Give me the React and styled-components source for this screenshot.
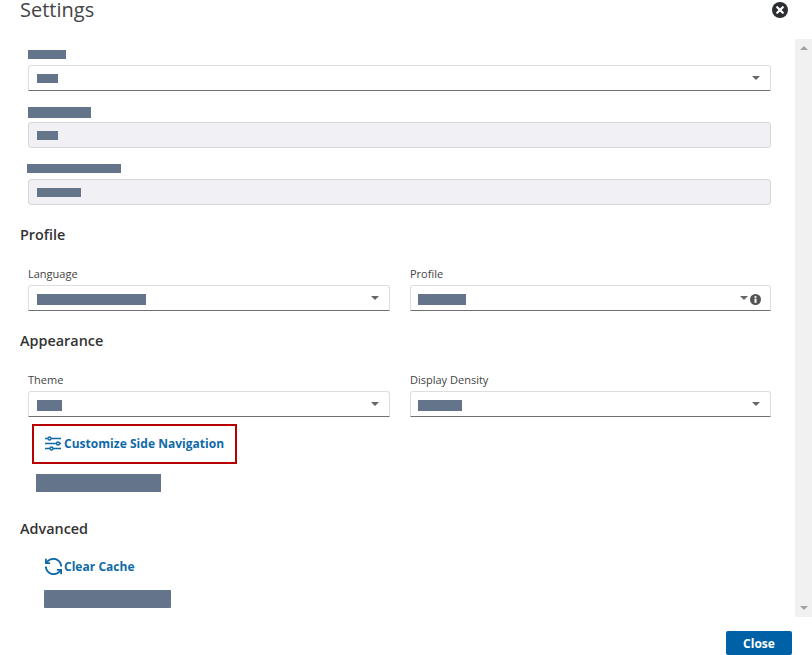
import styled, { createGlobalStyle } from "styled-components"

const Global = createGlobalStyle`
    html, body {
        margin: 0;
        padding: 0;
        background: #fff;
        overflow: hidden;
    }
    * {
        box-sizing: border-box;
    }
`

const Modal = styled.div`
    display: flex;
    flex-direction: column;
    width: 812px;
    height: 655px;
    overflow: hidden;
    font-family: "Open Sans", "Liberation Sans", sans-serif;
    color: #333;
`

const Header = styled.header`
    display: flex;
    justify-content: space-between;
    align-items: flex-start;
    height: 39px;
    padding: 2px 24px 0 20px;
`

const Title = styled.h1`
    margin: -2px 0 0 0;
    font-size: 20px;
    line-height: 19px;
    font-weight: 400;
    color: #444;
`

const CloseIcon = styled.button`
    display: block;
    width: 16px;
    height: 16px;
    padding: 0;
    border: none;
    background: none;
    cursor: pointer;
`

const Middle = styled.div`
    display: flex;
    height: 578px;
`

const Body = styled.main`
    flex: 1;
    padding: 11px 24px 0 20px;
`

const Scrollbar = styled.div`
    display: flex;
    flex-direction: column;
    justify-content: space-between;
    align-items: center;
    width: 17px;
    padding: 7px 0;
    background: #f1f1f1;
`

const ScrollArrow = styled.span`
    width: 0;
    height: 0;
    border-left: 4px solid transparent;
    border-right: 4px solid transparent;
    border-${(p) => (p.$down ? "top" : "bottom")}: 4px solid #a3a3a3;
`

const Redacted = styled.div`
    width: ${(p) => p.$w}px;
    height: ${(p) => p.$h}px;
    margin-left: ${(p) => p.$left || 0}px;
    margin-top: ${(p) => p.$top || 0}px;
    margin-bottom: ${(p) => p.$bottom || 0}px;
    background: #64748b;
    border-radius: ${(p) => p.$round || 0}px;
`

const Field = styled.div`
    margin-left: 8px;
    margin-bottom: 16px;
`

const Input = styled.div`
    display: flex;
    align-items: center;
    justify-content: space-between;
    height: 26px;
    padding: 1px ${(p) => p.$right || 10}px 0 ${(p) => p.$inset || 8}px;
    border: 1px solid ${(p) => (p.$disabled ? "#d6d6da" : "#dedede")};
    border-bottom-color: ${(p) => (p.$disabled ? "#d6d6da" : "#707070")};
    border-radius: 3px 3px ${(p) => (p.$disabled ? "3px 3px" : "0 0")};
    background: ${(p) => (p.$disabled ? "#f0f0f5" : "#fff")};
`

const Controls = styled.div`
    display: flex;
    align-items: center;
    gap: 2px;
`

const Caret = styled.span`
    flex: none;
    width: 0;
    height: 0;
    margin-bottom: 1px;
    border-left: 4.5px solid transparent;
    border-right: 4.5px solid transparent;
    border-top: 4px solid #666;
`

const SectionTitle = styled.h2`
    margin: ${(p) => p.$top || 0}px 0 0 0;
    font-size: 14.4px;
    line-height: 20px;
    font-weight: 600;
    color: #333;
`

const Columns = styled.div`
    display: grid;
    grid-template-columns: 362px 361px;
    gap: 20px;
    margin: 21px 0 0 8px;
`

const Label = styled.label`
    display: block;
    margin-bottom: 3px;
    font-size: 11px;
    line-height: 16px;
    color: #444;
`

const LinkButton = styled.a`
    display: inline-flex;
    align-items: center;
    gap: ${(p) => p.$gap}px;
    margin-top: -2px;
    font-size: 12px;
    letter-spacing: 0.03px;
    font-weight: 700;
    color: #0f6aa8;
    text-decoration: none;
    cursor: pointer;
`

const Highlight = styled.div`
    display: flex;
    align-items: center;
    width: 205px;
    height: 40px;
    margin: 7px 0 0 12px;
    padding-left: 11px;
    border: 2px solid #b80000;
`

const CacheRow = styled.div`
    display: flex;
    margin: 21px 0 0 25px;
`

const Footer = styled.footer`
    display: flex;
    justify-content: flex-end;
    align-items: flex-end;
    flex: 1;
    padding-right: 20px;
`

const CloseButton = styled.button`
    width: 66px;
    height: 24px;
    border: none;
    border-radius: 2px;
    background: #0061a6;
    color: #fff;
    font-family: inherit;
    font-size: 12px;
    font-weight: 700;
    cursor: pointer;
`

const CircleX = () => (
    <svg width="16" height="16" viewBox="0 0 16 16">
        <circle cx="8" cy="8" r="8" fill="#2b2f33" />
        <path d="M5.2 5.2l5.6 5.6M10.8 5.2l-5.6 5.6" stroke="#fff" strokeWidth="2.2" strokeLinecap="round" />
    </svg>
)

const InfoGlyph = styled.svg`
    flex: none;
    margin-top: 2px;
`

const InfoIcon = () => (
    <InfoGlyph width="11" height="11" viewBox="0 0 12 12">
        <circle cx="6" cy="6" r="6" fill="#555" />
        <rect x="4.9" y="5" width="2.2" height="4.6" fill="#fff" />
        <rect x="4.9" y="2.3" width="2.2" height="1.8" fill="#fff" />
    </InfoGlyph>
)

const SlidersIcon = () => (
    <svg width="16" height="15" viewBox="0 0 16 15" fill="none" stroke="#0f6aa8" strokeWidth="1.4">
        <path d="M0 2.5h16M0 7.5h16M0 12.5h16" />
        <circle cx="4.5" cy="2.5" r="1.5" fill="#fff" />
        <circle cx="13" cy="7.5" r="1.5" fill="#fff" />
        <circle cx="6.5" cy="12.5" r="1.5" fill="#fff" />
    </svg>
)

const SyncIcon = () => (
    <svg width="17" height="17" viewBox="2 2 20 20" fill="none" stroke="#0f6aa8" strokeWidth="2.2">
        <path d="M21 12a9 9 0 0 0-9-9 9.75 9.75 0 0 0-6.74 2.74L3 8" />
        <path d="M3 3v5h5" />
        <path d="M3 12a9 9 0 0 0 9 9 9.75 9.75 0 0 0 6.74-2.74L21 16" />
        <path d="M16 16h5v5" />
    </svg>
)

const App = () => {
    return (
        <>
            <Global />
            <Modal>
                <Header>
                    <Title>Settings</Title>
                    <CloseIcon aria-label="Close"><CircleX /></CloseIcon>
                </Header>
                <Middle>
                    <Body>
                        <Field>
                            <Redacted $w={38} $h={9} $bottom={6} />
                            <Input>
                                <Redacted $w={21} $h={9} />
                                <Caret />
                            </Input>
                        </Field>
                        <Field>
                            <Redacted $w={63} $h={11} $bottom={4} />
                            <Input $disabled>
                                <Redacted $w={21} $h={9} />
                            </Input>
                        </Field>
                        <Field>
                            <Redacted $w={94} $h={9} $left={-1} $bottom={6} />
                            <Input $disabled>
                                <Redacted $w={44} $h={9} />
                            </Input>
                        </Field>

                        <SectionTitle $top={20}>Profile</SectionTitle>
                        <Columns>
                            <div>
                                <Label>Language</Label>
                                <Input>
                                    <Redacted $w={109} $h={11} $top={2} />
                                    <Caret />
                                </Input>
                            </div>
                            <div>
                                <Label>Profile</Label>
                                <Input $inset={7} $right={9}>
                                    <Redacted $w={48} $h={11} $top={2} />
                                    <Controls>
                                        <Caret />
                                        <InfoIcon />
                                    </Controls>
                                </Input>
                            </div>
                        </Columns>

                        <SectionTitle $top={20}>Appearance</SectionTitle>
                        <Columns>
                            <div>
                                <Label>Theme</Label>
                                <Input>
                                    <Redacted $w={25} $h={11} $top={2} />
                                    <Caret />
                                </Input>
                            </div>
                            <div>
                                <Label>Display Density</Label>
                                <Input $inset={7}>
                                    <Redacted $w={44} $h={11} $top={2} />
                                    <Caret />
                                </Input>
                            </div>
                        </Columns>
                        <Highlight>
                            <LinkButton $gap={3}>
                                <SlidersIcon />
                                Customize Side Navigation
                            </LinkButton>
                        </Highlight>
                        <Redacted $w={125} $h={18} $left={16} $top={10} />

                        <SectionTitle $top={27}>Advanced</SectionTitle>
                        <CacheRow>
                            <LinkButton $gap={2}>
                                <SyncIcon />
                                Clear Cache
                            </LinkButton>
                        </CacheRow>
                        <Redacted $w={127} $h={18} $left={24} $top={15} $round={1} />
                    </Body>
                    <Scrollbar>
                        <ScrollArrow />
                        <ScrollArrow $down />
                    </Scrollbar>
                </Middle>
                <Footer>
                    <CloseButton>Close</CloseButton>
                </Footer>
            </Modal>
        </>
    )
}

export default App
